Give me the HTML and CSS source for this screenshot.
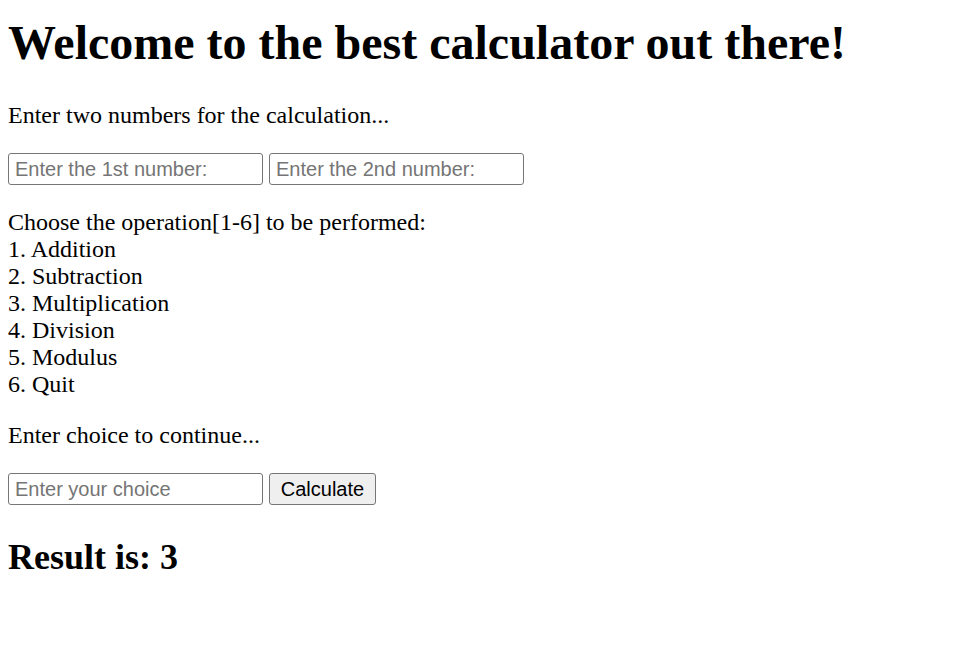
FILE: index.html
```html
<!DOCTYPE html>
<html>
<head>
<meta charset="utf-8">
<title>Calculator</title>
<link rel="stylesheet" href="styles.css">
</head>
<body>
<h1 class="title">Welcome to the best calculator out there!</h1>
<p class="text">Enter two numbers for the calculation...</p>
<div class="row">
  <input class="field" type="text" placeholder="Enter the 1st number:">
  <input class="field" type="text" placeholder="Enter the 2nd number:">
</div>
<p class="text">Choose the operation[1-6] to be performed:<br>1. Addition<br>2. Subtraction<br>3. Multiplication<br>4. Division<br>5. Modulus<br>6. Quit</p>
<p class="text">Enter choice to continue...</p>
<div class="row">
  <input class="field" type="text" placeholder="Enter your choice">
  <button class="btn" type="button">Calculate</button>
</div>
<h2 class="result">Result is: 3</h2>
</body>
</html>
```
FILE: styles.css
```css
html, body {
  background: #fff;
}
body {
  margin: 0;
  padding: 0 8px;
  font-family: "Liberation Serif", "Times New Roman", serif;
  color: #000;
}
.title {
  font-size: 48px;
  line-height: 55px;
  font-weight: bold;
  margin: 15px 0 32px;
}
.text {
  font-size: 24px;
  line-height: 27px;
  margin: 24px 0;
}
.row {
  display: flex;
  gap: 6px;
  margin: 24px 0;
}
.field {
  box-sizing: border-box;
  width: 255px;
  height: 32px;
  margin: 0;
  padding: 0 6px;
  border: 1px solid #767676;
  border-radius: 3px;
  font-family: "Liberation Sans", Arial, sans-serif;
  font-size: 20px;
  color: #000;
  background: #fff;
}
.field::placeholder {
  color: #757575;
}
.btn {
  box-sizing: border-box;
  height: 32px;
  width: 107px;
  margin: 0;
  padding: 0;
  border: 1px solid #767676;
  border-radius: 3px;
  background: #efefef;
  font-family: "Liberation Sans", Arial, sans-serif;
  font-size: 20px;
  color: #000;
}
.result {
  font-size: 36px;
  line-height: 41px;
  font-weight: bold;
  margin: 32px 0 30px;
}
```
